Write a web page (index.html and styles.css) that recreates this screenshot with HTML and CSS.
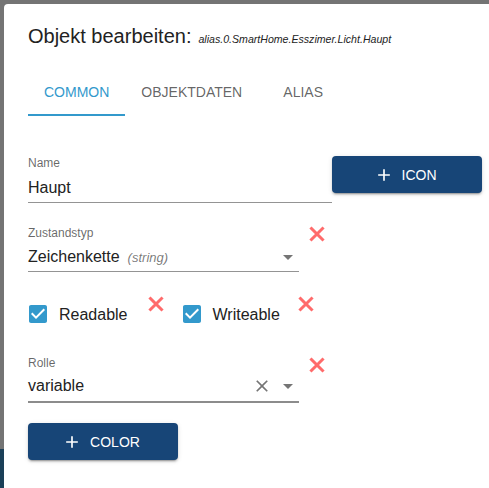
FILE: index.html
```html
<!DOCTYPE html>
<html lang="de">
<head>
<meta charset="utf-8">
<title>Objekt bearbeiten</title>
<link rel="stylesheet" href="styles.css">
</head>
<body>
<div class="dialog">
  <h2 class="title">Objekt bearbeiten:<span class="sub">alias.0.SmartHome.Esszimer.Licht.Haupt</span></h2>
  <div class="tabs">
    <div class="tab active">Common</div>
    <div class="tab">Objektdaten</div>
    <div class="tab">Alias</div>
  </div>

  <div class="row row-name">
    <div class="field w-name">
      <div class="label">Name</div>
      <div class="input">Haupt</div>
    </div>
    <button class="btn"><svg class="plus" viewBox="0 0 24 24"><path d="M19 13h-6v6h-2v-6H5v-2h6V5h2v6h6v2z"/></svg><span>Icon</span></button>
  </div>

  <div class="row row-type">
    <div class="field w-sel">
      <div class="label">Zustandstyp</div>
      <div class="input">
        <span class="val">Zeichenkette<span class="hint">(string)</span></span>
        <svg class="arrow" viewBox="0 0 24 24"><path d="M7 10l5 5 5-5z"/></svg>
      </div>
    </div>
    <svg class="del del-sel" viewBox="0 0 16 16"><path d="M2.5 2.5L13.5 13.5M13.5 2.5L2.5 13.5"/></svg>
  </div>

  <div class="row row-checks">
    <label class="check">
      <span class="cb"><svg viewBox="0 0 24 24"><path d="M19 3H5c-1.11 0-2 .9-2 2v14c0 1.1.89 2 2 2h14c1.11 0 2-.9 2-2V5c0-1.1-.89-2-2-2zm-9 14l-5-5 1.41-1.41L10 14.17l7.59-7.59L19 8l-9 9z"/></svg></span>
      <span class="cl">Readable</span>
    </label>
    <svg class="del del-read" viewBox="0 0 16 16"><path d="M2.5 2.5L13.5 13.5M13.5 2.5L2.5 13.5"/></svg>
    <label class="check check2">
      <span class="cb"><svg viewBox="0 0 24 24"><path d="M19 3H5c-1.11 0-2 .9-2 2v14c0 1.1.89 2 2 2h14c1.11 0 2-.9 2-2V5c0-1.1-.89-2-2-2zm-9 14l-5-5 1.41-1.41L10 14.17l7.59-7.59L19 8l-9 9z"/></svg></span>
      <span class="cl">Writeable</span>
    </label>
    <svg class="del del-write" viewBox="0 0 16 16"><path d="M2.5 2.5L13.5 13.5M13.5 2.5L2.5 13.5"/></svg>
  </div>

  <div class="row row-role">
    <div class="field w-sel focus">
      <div class="label">Rolle</div>
      <div class="input">
        <span class="val">variable</span>
        <svg class="clear" viewBox="0 0 24 24"><path d="M19 6.41L17.59 5 12 10.59 6.41 5 5 6.41 10.59 12 5 17.59 6.41 19 12 13.41 17.59 19 19 17.59 13.41 12z"/></svg>
        <svg class="arrow" viewBox="0 0 24 24"><path d="M7 10l5 5 5-5z"/></svg>
      </div>
    </div>
    <svg class="del del-role" viewBox="0 0 16 16"><path d="M2.5 2.5L13.5 13.5M13.5 2.5L2.5 13.5"/></svg>
  </div>

  <div class="row row-color">
    <button class="btn"><svg class="plus" viewBox="0 0 24 24"><path d="M19 13h-6v6h-2v-6H5v-2h6V5h2v6h6v2z"/></svg><span>Color</span></button>
  </div>
</div>
</body>
</html>
```

FILE: styles.css
```css
html, body {
  margin: 0;
  padding: 0;
  height: 488px;
  overflow: hidden;
}
body {
  background: linear-gradient(#747474 0, #747474 449px, #1b4058 449px, #1b4058 100%);
  font-family: "Liberation Sans", Arial, sans-serif;
  color: rgba(0, 0, 0, 0.87);
}
.dialog {
  margin: 4px 0 0 4px;
  height: 484px;
  background: #fff;
  border-top-left-radius: 4px;
  padding: 0 24px;
  box-sizing: border-box;
  overflow: hidden;
}
.title {
  margin: 0;
  padding-top: 16px;
  height: 32px;
  font-size: 20px;
  line-height: 32px;
  font-weight: 400;
  color: #222;
  white-space: nowrap;
}
.sub {
  font-style: italic;
  font-size: 10.6px;
  line-height: 10px;
  margin-left: 7px;
  color: #222;
}
.tabs {
  margin-top: 16px;
  display: flex;
  height: 48px;
}
.tab {
  box-sizing: border-box;
  min-width: 90px;
  padding: 0 16px;
  height: 48px;
  display: flex;
  align-items: center;
  justify-content: center;
  font-size: 14px;
  font-weight: 400;
  text-transform: uppercase;
  color: rgba(0, 0, 0, 0.62);
}
.tab.active {
  color: #3399cc;
  border-bottom: 2px solid #3399cc;
  padding-top: 2px;
}
.row {
  display: flex;
  align-items: flex-start;
}
.row-name { margin-top: 40px; }
.row-type { margin-top: 23px; }
.row-checks { margin-top: 21px; }
.row-role { margin-top: 21px; }
.row-color { margin-top: 20px; }

.field {
  box-sizing: border-box;
  flex: none;
  border-bottom: 1px solid rgba(0, 0, 0, 0.42);
}
.field.focus {
  border-bottom: 2px solid #8c8c8c;
}
.w-name { width: 304px; }
.w-sel { width: 271px; }
.label {
  font-size: 12px;
  line-height: 14px;
  height: 14px;
  color: rgba(0, 0, 0, 0.6);
}
.input {
  margin-top: 8px;
  padding-bottom: 5px;
  font-size: 16px;
  line-height: 19px;
  height: 19px;
  display: flex;
  align-items: center;
  color: #222;
}
.row-type .input { margin-top: 7px; }
.row-role .input { margin-top: 6px; padding-bottom: 6px; }
.val {
  flex: 1;
  white-space: nowrap;
}
.hint {
  font-style: italic;
  font-size: 13px;
  color: rgba(0, 0, 0, 0.54);
  margin-left: 8px;
}
.arrow {
  width: 24px;
  height: 24px;
  fill: #757575;
  flex: none;
  margin-right: -0.5px;
}
.clear {
  width: 20px;
  height: 20px;
  fill: #757575;
  flex: none;
  margin-right: 4px;
  margin-top: 1px;
}
.del {
  width: 16px;
  height: 16px;
  flex: none;
  fill: none;
  stroke: #ff5c5c;
  stroke-width: 3;
  stroke-linecap: square;
  opacity: 0.9;
}
.del-sel { margin-left: 10px; }
.del-role { margin-left: 10px; margin-top: 1px; }
.del-read { margin-left: 20px; margin-top: 3px; }
.del-write { margin-left: 18px; margin-top: 3px; }

.btn {
  box-sizing: border-box;
  flex: none;
  width: 150px;
  height: 37px;
  border: none;
  border-radius: 4px;
  background: #174577;
  color: #fff;
  font-family: "Liberation Sans", Arial, sans-serif;
  font-size: 14px;
  font-weight: 400;
  text-transform: uppercase;
  display: flex;
  align-items: center;
  justify-content: center;
  padding: 0;
  box-shadow: 0 3px 1px -2px rgba(0,0,0,0.2), 0 2px 2px 0 rgba(0,0,0,0.14), 0 1px 5px 0 rgba(0,0,0,0.12);
}
.plus {
  width: 20px;
  height: 20px;
  fill: #fff;
  margin-right: 8px;
  margin-left: -4px;
}

.check {
  display: flex;
  align-items: center;
  margin-left: -11px;
  flex: none;
}
.check2 { margin-left: 7px; }
.cb {
  padding: 9px;
  width: 24px;
  height: 24px;
}
.cb svg {
  width: 24px;
  height: 24px;
  fill: #3399cc;
  display: block;
}
.cl {
  font-size: 16px;
  line-height: 19px;
  color: #222;
}
```
